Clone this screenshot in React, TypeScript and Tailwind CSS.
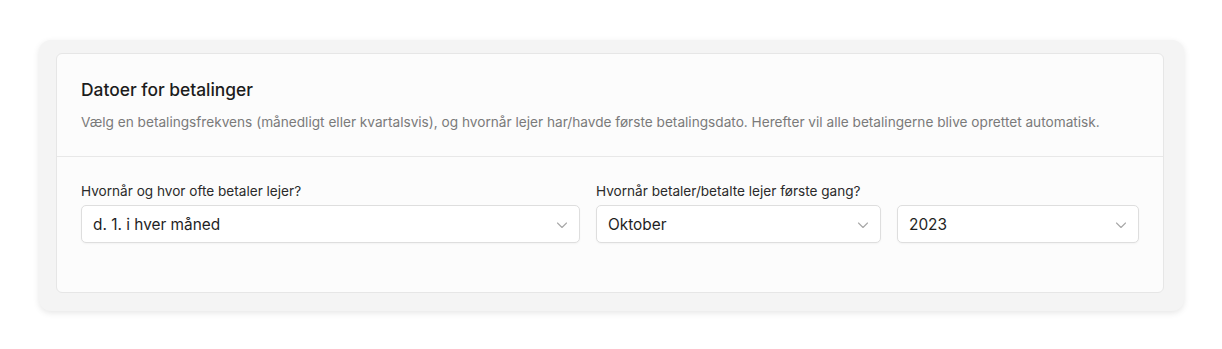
import React from "react";

function Chevron() {
  return (
    <svg width="12" height="12" viewBox="0 0 12 12" fill="none" className="shrink-0">
      <path d="M1.5 4l4.5 4.5L10.5 4" stroke="#a8a8a8" strokeWidth="1.1" strokeLinecap="round" strokeLinejoin="round" />
    </svg>
  );
}

function Select({ value }: { value: string }) {
  return (
    <div className="flex h-[38px] items-center justify-between rounded-[5px] border border-[#dedede] bg-white pl-[11px] pr-[11px] pt-[1px] shadow-[0_1px_2px_rgba(0,0,0,0.04)]">
      <span className="text-[15.4px] text-[#1f1f1f]">{value}</span>
      <Chevron />
    </div>
  );
}

export default function App() {
  return (
    <div className="min-h-screen bg-white pt-[40px] pl-[39px] pr-[38px]" style={{ fontFamily: "Inter, 'Noto Sans', sans-serif" }}>
      <div className="rounded-[12px] bg-[#f4f4f4] pt-[13px] pb-[18px] pl-[17px] pr-[20px] shadow-[0_2px_6px_rgba(0,0,0,0.10)]">
        <div className="rounded-[6px] border border-[#e6e6e6] bg-[#fcfcfc]">
          <div className="border-b border-[#e8e8e8] px-[24px] pt-[24px] pb-[24px]">
            <h2 className="text-[17.4px] leading-[24px] font-medium text-[#1c1c1c]">Datoer for betalinger</h2>
            <p className="mt-[10px] text-[13.65px] leading-[20px] text-[#7a7a7a]">
              Vælg en betalingsfrekvens (månedligt eller kvartalsvis), og hvornår lejer har/havde første betalingsdato. Herefter vil alle betalingerne blive oprettet automatisk.
            </p>
          </div>
          <div className="px-[24px] pt-[24px] pb-[49px]">
            <div className="grid grid-cols-[499fr_543fr] gap-x-[16px]">
              <div>
                <div className="mb-[4px] text-[13.6px] leading-[20px] text-[#2a2a2a]">Hvornår og hvor ofte betaler lejer?</div>
                <Select value="d. 1. i hver måned" />
              </div>
              <div>
                <div className="mb-[4px] text-[13.6px] leading-[20px] text-[#2a2a2a]">Hvornår betaler/betalte lejer første gang?</div>
                <div className="grid grid-cols-[285fr_242fr] gap-x-[16px]">
                  <Select value="Oktober" />
                  <Select value="2023" />
                </div>
              </div>
            </div>
          </div>
        </div>
      </div>
    </div>
  );
}
